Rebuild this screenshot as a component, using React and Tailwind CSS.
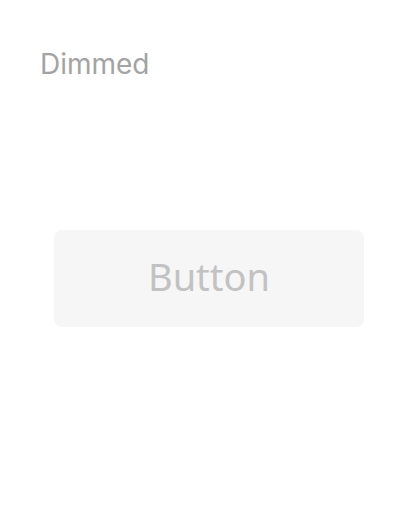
export default function App() {
  return (
    <div className="w-[420px] h-[526px] bg-white flex flex-col" style={{ fontFamily: '"Noto Sans", sans-serif' }}>
      <div className="pl-[40px] pt-[47px] text-[28px] leading-[34px] text-[#a3a3a3]" style={{ fontFamily: 'Inter, sans-serif' }}>
        Dimmed
      </div>
      <div className="flex pl-[54px] mt-[149px]">
        <div className="w-[310px] h-[97px] rounded-[8px] bg-[#f6f6f6] flex items-center justify-center pb-[5px] text-[38px] text-[#c2c2c2]">
          Button
        </div>
      </div>
    </div>
  );
}
